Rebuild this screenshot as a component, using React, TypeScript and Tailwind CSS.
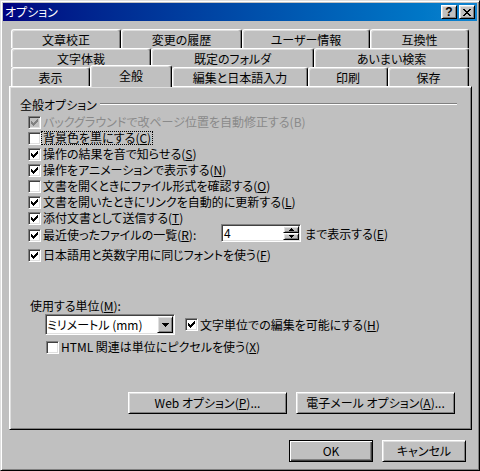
import React from "react";

const Check = ({ color = "#000" }: { color?: string }) => (
  <svg width="7" height="7" viewBox="0 0 7 7" shapeRendering="crispEdges">
    <path
      fill={color}
      d="M6 0h1v1H6z M5 1h2v1H5z M0 2h1v1H0z M4 2h3v1H4z M0 3h2v1H0z M3 3h3v1H3z M0 4h5v1H0z M1 5h3v1H1z M2 6h1v1H2z"
    />
  </svg>
);

function CheckBox({ checked, disabled }: { checked?: boolean; disabled?: boolean }) {
  return (
    <div
      className={`flex h-[13px] w-[13px] shrink-0 items-center justify-center border border-t-[#808080] border-l-[#808080] border-b-white border-r-white shadow-[inset_1px_1px_#404040,inset_-1px_-1px_#dfdfdf] ${
        disabled ? "bg-[#c0c0c0]" : "bg-white"
      }`}
    >
      {checked && <Check color={disabled ? "#808080" : "#000"} />}
    </div>
  );
}

const AK = ({ k }: { k: string }) => (
  <>
    (<span className="underline underline-offset-[1px]">{k}</span>)
  </>
);

function CheckRow({
  checked,
  disabled,
  focus,
  children,
}: {
  checked?: boolean;
  disabled?: boolean;
  focus?: boolean;
  children: React.ReactNode;
}) {
  return (
    <div className="flex h-[16px] items-center">
      <CheckBox checked={checked} disabled={disabled} />
      <span
        className={`border px-[1px] leading-[12px] whitespace-nowrap ${
          focus ? "border-dotted border-black" : "border-transparent"
        } ${disabled ? "text-[#8a8a8a]" : "text-black"}`}
      >
        {children}
      </span>
    </div>
  );
}

const tabRows: { label: string; w: string; selected?: boolean }[][] = [
  [
    { label: "文章校正", w: "w-[110px]" },
    { label: "変更の履歴", w: "w-[121px]" },
    { label: "ユーザー情報", w: "w-[128px]" },
    { label: "互換性", w: "w-[99px]" },
  ],
  [
    { label: "文字体裁", w: "w-[140px]" },
    { label: "既定のフォルダ", w: "w-[163px]" },
    { label: "あいまい検索", w: "w-[155px]" },
  ],
  [
    { label: "表示", w: "w-[79px]" },
    { label: "全般", w: "w-[82px]", selected: true },
    { label: "編集と日本語入力", w: "w-[136px]" },
    { label: "印刷", w: "w-[80px]" },
    { label: "保存", w: "w-[81px]" },
  ],
];

function Tab({ label, w, selected }: { label: string; w: string; selected?: boolean }) {
  return (
    <div
      className={`flex shrink-0 items-center justify-center rounded-t-[3px] border-l border-t border-r border-l-white border-t-white border-r-black bg-[#c0c0c0] shadow-[inset_-1px_0_#808080,inset_1px_1px_#dfdfdf] ${w} ${
        selected ? "relative z-10 -mb-[1px] h-[22px] pb-[1px]" : "h-[19px] pt-[1px]"
      }`}
    >
      {label}
    </div>
  );
}

const bevel =
  "border border-t-white border-l-white border-r-black border-b-black shadow-[inset_1px_1px_#dfdfdf,inset_-1px_-1px_#808080] bg-[#c0c0c0]";

const sunken =
  "border border-t-[#808080] border-l-[#808080] border-b-white border-r-white shadow-[inset_1px_1px_#404040,inset_-1px_-1px_#dfdfdf]";

function Button({ children, className = "" }: { children: React.ReactNode; className?: string }) {
  return (
    <div className={`flex h-[22px] items-center justify-center ${bevel} ${className}`}>{children}</div>
  );
}

export default function App() {
  return (
    <div className="flex h-[471px] w-[480px] flex-col border border-t-[#dfdfdf] border-l-[#dfdfdf] border-r-black border-b-black bg-[#c0c0c0] p-[2px] font-['Noto_Sans_CJK_JP','Noto_Sans',sans-serif] text-[12px] leading-[14px] text-black shadow-[inset_1px_1px_#fff,inset_-1px_-1px_#808080] [font-feature-settings:'palt']">
      {/* title bar */}
      <div className="flex h-[18px] shrink-0 items-center bg-linear-to-r from-[#000080] to-[#1084d0] pl-[2px] pr-[2px]">
        <span className="flex-1 text-white">オプション</span>
        <div className="flex gap-[2px]">
          <div className={`flex h-[14px] w-[16px] items-center justify-center ${bevel}`}>
            <span className="font-['Liberation_Sans',sans-serif] text-[12px] leading-[12px] font-bold">?</span>
          </div>
          <div className={`flex h-[14px] w-[16px] items-center justify-center ${bevel}`}>
            <svg width="8" height="7" viewBox="0 0 8 7" shapeRendering="crispEdges">
              <path
                fill="#000"
                d="M0 0h2v1H0z M6 0h2v1H6z M1 1h2v1H1z M5 1h2v1H5z M2 2h4v1H2z M3 3h2v1H3z M2 4h4v1H2z M1 5h2v1H1z M5 5h2v1H5z M0 6h2v1H0z M6 6h2v1H6z"
              />
            </svg>
          </div>
        </div>
      </div>

      {/* body */}
      <div className="flex flex-col pl-[6px] pr-[5px] pt-[8px]">
        {/* tabs */}
        <div className="flex flex-col pl-[2px]">
          {tabRows.map((row, i) => (
            <div key={i} className="flex h-[19px] items-end">
              {row.map((t) => (
                <Tab key={t.label} {...t} />
              ))}
            </div>
          ))}
        </div>

        {/* panel */}
        <div className="flex h-[344px] flex-col border border-t-white border-l-white border-r-black border-b-black shadow-[inset_1px_1px_#dfdfdf,inset_-1px_-1px_#808080]">
          {/* group header */}
          <div className="mt-[10px] flex h-[16px] items-center pl-[10px] pr-[14px]">
            <span>全般オプション</span>
            <div className="ml-[3px] -mt-[2px] h-[2px] flex-1 border-t border-b border-t-[#808080] border-b-white" />
          </div>

          <div className="mt-[1px] flex flex-col pl-[18px]">
            <CheckRow checked disabled>
              バックグラウンドで改ページ位置を自動修正する(B)
            </CheckRow>
            <CheckRow focus>
              背景色を黒にする<AK k="C" />
            </CheckRow>
            <CheckRow checked>
              操作の結果を音で知らせる<AK k="S" />
            </CheckRow>
            <CheckRow checked>
              操作をアニメーションで表示する<AK k="N" />
            </CheckRow>
            <CheckRow>
              文書を開くときにファイル形式を確認する<AK k="O" />
            </CheckRow>
            <CheckRow checked>
              文書を開いたときにリンクを自動的に更新する<AK k="L" />
            </CheckRow>
            <CheckRow checked>
              添付文書として送信する<AK k="T" />
            </CheckRow>
            {/* spin row */}
            <div className="flex h-[18px] items-center">
              <CheckBox checked />
              <span className="w-[180px] shrink-0 border border-transparent px-[1px] leading-[12px] whitespace-nowrap">
                最近使ったファイルの一覧<AK k="R" />:
              </span>
              <div className={`-mt-[4px] flex h-[18px] w-[80px] items-center bg-white ${sunken}`}>
                <span className="flex-1 pl-[2px] leading-[12px]">4</span>
                <div className="mr-[1px] flex h-[14px] w-[16px] flex-col">
                  <div className={`flex h-[7px] items-center justify-center ${bevel}`}>
                    <svg width="5" height="3" viewBox="0 0 5 3" shapeRendering="crispEdges">
                      <path fill="#000" d="M2 0h1v1H2z M1 1h3v1H1z M0 2h5v1H0z" />
                    </svg>
                  </div>
                  <div className={`flex h-[7px] items-center justify-center ${bevel}`}>
                    <svg width="5" height="3" viewBox="0 0 5 3" shapeRendering="crispEdges">
                      <path fill="#000" d="M0 0h5v1H0z M1 1h3v1H1z M2 2h1v1H2z" />
                    </svg>
                  </div>
                </div>
              </div>
              <span className="ml-[4px] -mt-[3px] whitespace-nowrap">
                まで表示する<AK k="E" />
              </span>
            </div>
            <div className="mt-[3px]">
              <CheckRow checked>
                日本語用と英数字用に同じフォントを使う<AK k="F" />
              </CheckRow>
            </div>
          </div>

          {/* units */}
          <div className="mt-[35px] flex h-[16px] items-center pl-[20px]">
            <span>
              使用する単位<AK k="M" />:
            </span>
          </div>
          <div className="flex h-[21px] items-center pl-[35px]">
            <div className={`flex h-[21px] w-[130px] items-center bg-white ${sunken}`}>
              <span className="flex-1 pl-[1px] leading-[12px] whitespace-nowrap">ミリメートル (mm)</span>
              <div className={`mr-[1px] flex h-[17px] w-[16px] items-center justify-center ${bevel}`}>
                <svg width="7" height="4" viewBox="0 0 7 4" shapeRendering="crispEdges">
                  <path fill="#000" d="M0 0h7v1H0z M1 1h5v1H1z M2 2h3v1H2z M3 3h1v1H3z" />
                </svg>
              </div>
            </div>
            <div className="ml-[10px]">
              <CheckRow checked>
                文字単位での編集を可能にする<AK k="H" />
              </CheckRow>
            </div>
          </div>
          <div className="mt-[4px] pl-[36px]">
            <CheckRow>
              HTML 関連は単位にピクセルを使う<AK k="X" />
            </CheckRow>
          </div>

          <div className="mt-[37px] flex gap-[9px] pl-[118px]">
            <Button className="w-[159px]">
              Web オプション<AK k="P" />...
            </Button>
            <Button className="w-[159px]">
              電子メール オプション<AK k="A" />...
            </Button>
          </div>
        </div>

        {/* footer */}
        <div className="mt-[10px] flex justify-end gap-[9px] pr-[6px]">
          <div className="flex h-[22px] w-[84px] items-center justify-center border border-black bg-[#c0c0c0] shadow-[inset_1px_1px_#fff,inset_-1px_-1px_#404040,inset_-2px_-2px_#808080]">
            OK
          </div>
          <Button className="w-[84px]">キャンセル</Button>
        </div>
      </div>
    </div>
  );
}
